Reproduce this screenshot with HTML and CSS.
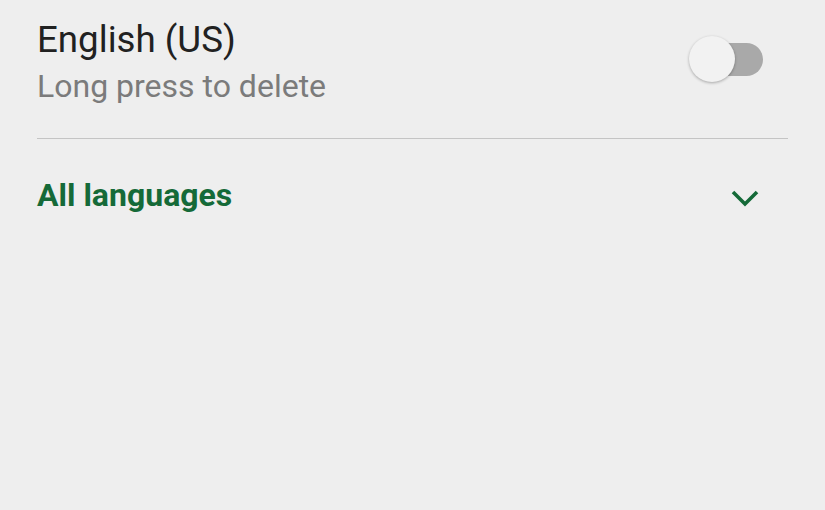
FILE: index.html
```html
<!DOCTYPE html>
<html>
<head>
  <meta charset="UTF-8">
  <title>Languages</title>
  <link rel="stylesheet" href="styles.css">
</head>
<body>
  <div class="lang-list">
    <div class="lang-row">
      <div class="lang-text">
        <div class="lang-name">English (US)</div>
        <div class="lang-hint">Long press to delete</div>
      </div>
      <div class="switch">
        <div class="switch-track"></div>
        <div class="switch-thumb"></div>
      </div>
    </div>

    <div class="all-row">
      <span class="all-label">All languages</span>
      <svg class="chevron" width="28" height="18" viewBox="0 0 28 18">
        <path d="M2 3 L14 15 L26 3" fill="none" stroke="#156a38" stroke-width="3.6"/>
      </svg>
    </div>
  </div>
</body>
</html>
```

FILE: styles.css
```css
:root {
  --bg-color: #eeeeee;
  --text-color: #212121;
  --hint-color: #7b7b7b;
  --divider-color: #c4c4c4;
  --accent-color: #156a38;
  --track-color: #a9a9a9;
  --thumb-color: #f2f2f2;
}

html, body {
  height: 100%;
  margin: 0;
}

body {
  font-family: Roboto, "Noto Sans", sans-serif;
  background-color: var(--bg-color);
  color: var(--text-color);
  overflow: hidden;
}

.lang-list {
  padding: 0 37px;
}

.lang-row {
  display: flex;
  align-items: flex-start;
  justify-content: space-between;
  height: 139px;
  border-bottom: 1px solid var(--divider-color);
  box-sizing: border-box;
}

.lang-text {
  padding-top: 18px;
}

.lang-name {
  font-size: 36.7px;
  line-height: 44px;
}

.lang-hint {
  font-size: 32px;
  line-height: 44px;
  color: var(--hint-color);
  margin-top: 2px;
}

.switch {
  position: relative;
  width: 74px;
  height: 46px;
  margin-top: 36px;
  margin-right: 25px;
}

.switch-track {
  position: absolute;
  left: 11px;
  top: 7px;
  width: 63px;
  height: 33px;
  border-radius: 17px;
  background-color: var(--track-color);
}

.switch-thumb {
  position: absolute;
  left: 0;
  top: 0;
  width: 46px;
  height: 46px;
  border-radius: 50%;
  background-color: var(--thumb-color);
  box-shadow: 0 1px 3px rgba(0, 0, 0, 0.3);
}

.all-row {
  display: flex;
  align-items: center;
  justify-content: space-between;
  padding-top: 34px;
}

.all-label {
  font-size: 32px;
  font-weight: bold;
  color: var(--accent-color);
  line-height: 44px;
}

.chevron {
  margin-right: 29px;
  margin-top: 5px;
}
```
